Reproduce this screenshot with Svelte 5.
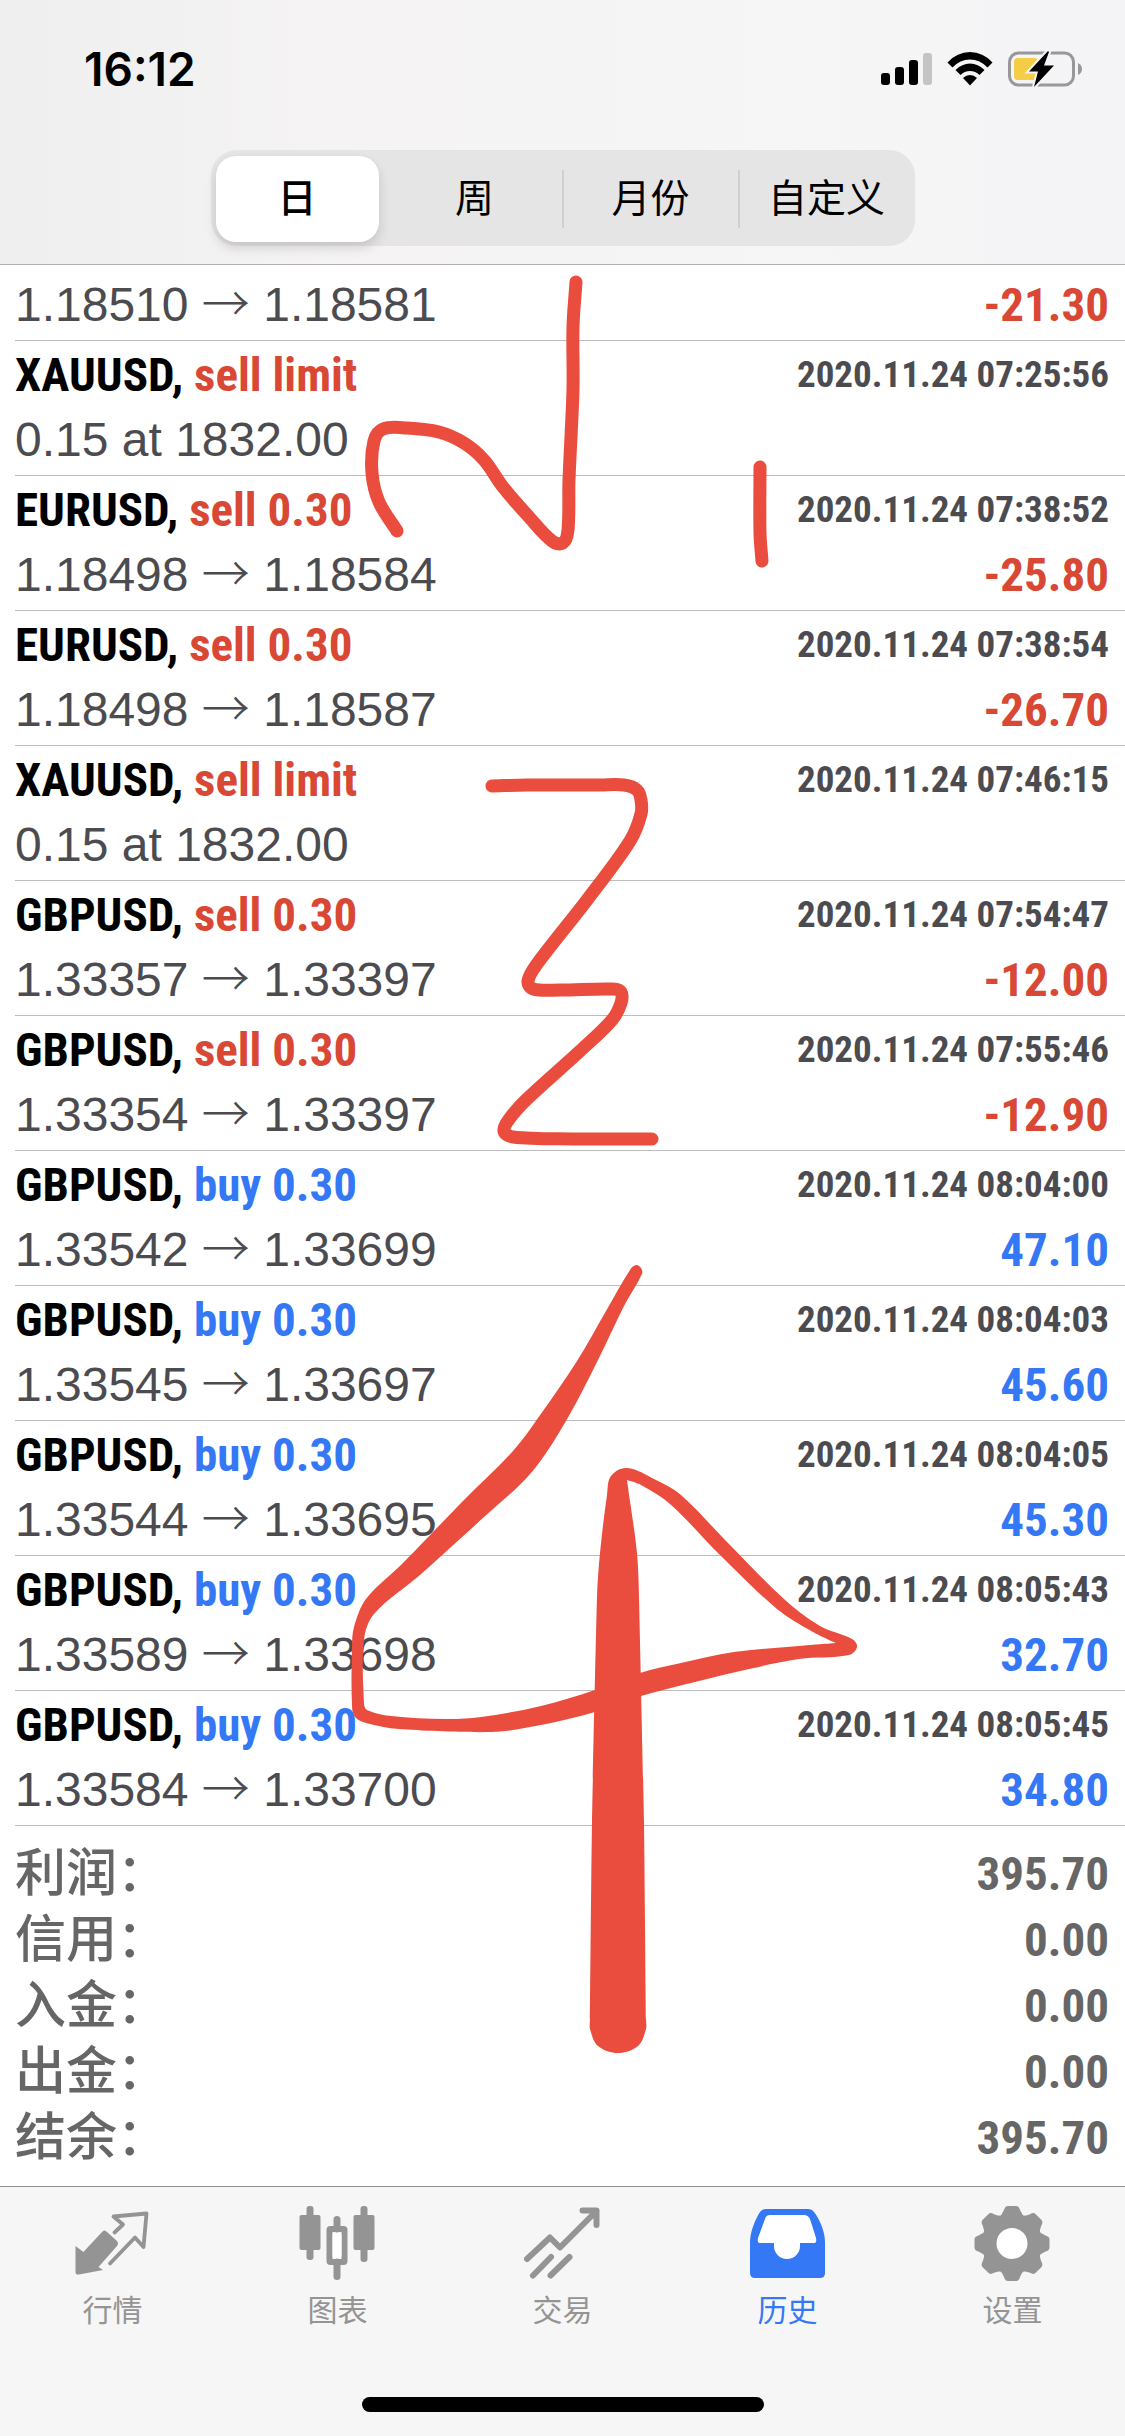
<script>
  const periods = ['日', '周', '月份', '自定义'];
  let period = $state('日');

  const deals = [
    { from: '1.18510', to: '1.18581', result: '-21.30' },
    { symbol: 'XAUUSD', side: 'sell', size: 'limit', time: '2020.11.24 07:25:56', note: '0.15 at 1832.00' },
    { symbol: 'EURUSD', side: 'sell', size: '0.30', time: '2020.11.24 07:38:52', from: '1.18498', to: '1.18584', result: '-25.80' },
    { symbol: 'EURUSD', side: 'sell', size: '0.30', time: '2020.11.24 07:38:54', from: '1.18498', to: '1.18587', result: '-26.70' },
    { symbol: 'XAUUSD', side: 'sell', size: 'limit', time: '2020.11.24 07:46:15', note: '0.15 at 1832.00' },
    { symbol: 'GBPUSD', side: 'sell', size: '0.30', time: '2020.11.24 07:54:47', from: '1.33357', to: '1.33397', result: '-12.00' },
    { symbol: 'GBPUSD', side: 'sell', size: '0.30', time: '2020.11.24 07:55:46', from: '1.33354', to: '1.33397', result: '-12.90' },
    { symbol: 'GBPUSD', side: 'buy', size: '0.30', time: '2020.11.24 08:04:00', from: '1.33542', to: '1.33699', result: '47.10' },
    { symbol: 'GBPUSD', side: 'buy', size: '0.30', time: '2020.11.24 08:04:03', from: '1.33545', to: '1.33697', result: '45.60' },
    { symbol: 'GBPUSD', side: 'buy', size: '0.30', time: '2020.11.24 08:04:05', from: '1.33544', to: '1.33695', result: '45.30' },
    { symbol: 'GBPUSD', side: 'buy', size: '0.30', time: '2020.11.24 08:05:43', from: '1.33589', to: '1.33698', result: '32.70' },
    { symbol: 'GBPUSD', side: 'buy', size: '0.30', time: '2020.11.24 08:05:45', from: '1.33584', to: '1.33700', result: '34.80' }
  ];

  const totals = [
    ['利润', '395.70'],
    ['信用', '0.00'],
    ['入金', '0.00'],
    ['出金', '0.00'],
    ['结余', '395.70']
  ];

  const tabs = [
    { id: 'quotes', label: '行情' },
    { id: 'charts', label: '图表' },
    { id: 'trade', label: '交易' },
    { id: 'history', label: '历史' },
    { id: 'settings', label: '设置' }
  ];
  let tab = $state('history');

  // Smooth curve through a list of pen points; sharp turns stay sharp
  function spline(pts, closed = false) {
    const n = pts.length;
    const at = (i) => (closed ? pts[(i + n) % n] : pts[Math.max(0, Math.min(n - 1, i))]);
    const unit = (a, b) => {
      const len = Math.hypot(b[0] - a[0], b[1] - a[1]) || 1;
      return [(b[0] - a[0]) / len, (b[1] - a[1]) / len];
    };
    const tangent = (i) => {
      const [u, v] = [unit(at(i - 1), at(i)), unit(at(i), at(i + 1))];
      return u[0] * v[0] + u[1] * v[1] < -0.1 ? [0, 0] : unit(at(i - 1), at(i + 1));
    };
    let d = `M${pts[0][0]} ${pts[0][1]}`;
    const last = closed ? n : n - 1;
    for (let i = 0; i < last; i++) {
      const [b, c, t, u] = [at(i), at(i + 1), tangent(i), tangent(i + 1)];
      const h = Math.min(24, Math.hypot(c[0] - b[0], c[1] - b[1]) / 3);
      d += `C${b[0] + t[0] * h} ${b[1] + t[1] * h} ${c[0] - u[0] * h} ${c[1] - u[1] * h} ${c[0]} ${c[1]}`;
    }
    return closed ? d + 'Z' : d;
  }

  const penStrokes = [
    [[397, 531], [379, 502], [372, 473], [374, 441], [383, 429], [407, 428], [439, 432], [464, 443], [484, 460], [503, 487], [529, 517], [552, 541], [563, 543], [568, 530], [569, 480], [573, 390], [573, 327], [576, 282]],
    [[760, 467], [760, 533], [762, 561]],
    [[492, 786], [527, 785], [600, 785], [624, 785], [637, 790], [641, 800], [641, 814], [630, 841], [587, 900], [537, 964], [528, 981], [533, 989], [560, 990], [613, 989], [621, 992], [621, 1003], [612, 1020], [580, 1051], [527, 1099], [510, 1118], [504, 1131], [513, 1137], [573, 1139], [625, 1139], [652, 1139]]
  ];

  const brush = [
    [636, 1265], [630, 1270], [606, 1311], [577, 1361], [538, 1418], [513, 1451], [463, 1501], [402, 1564], [366, 1599], [354, 1627], [352, 1646], [352, 1706], [355, 1717], [366, 1723], [399, 1729], [491, 1732], [541, 1725], [595, 1712], [641, 1696], [695, 1682], [749, 1669], [799, 1659], [849, 1655], [857, 1647], [852, 1639], [820, 1626], [784, 1599], [727, 1542], [681, 1495], [656, 1480], [627, 1468], [611, 1476], [607, 1495], [600, 1553], [597, 1597], [592, 1821], [590, 2020], [590, 2029], [598, 2046], [618, 2053], [638, 2046], [646, 2029], [646, 2020], [644, 1821], [639, 1597], [637, 1553], [630, 1501], [627, 1480], [641, 1485], [670, 1504], [720, 1555], [777, 1609], [813, 1632], [836, 1643], [799, 1646], [734, 1652], [681, 1663], [640, 1673], [595, 1690], [541, 1706], [481, 1717], [445, 1719], [391, 1716], [367, 1710], [364, 1703], [364, 1640], [374, 1614], [420, 1575], [484, 1517], [531, 1473], [566, 1421], [599, 1358], [624, 1306], [642, 1274], [641, 1268]
  ];
</script>

<div class="page">
  <header>
    <div class="status">
      <time>16:12</time>
      <div class="indicators">
        <svg width="51" height="36" viewBox="0 0 51 36" aria-hidden="true">
          <rect x="0" y="22" width="9" height="12" rx="3" />
          <rect x="14" y="16" width="9" height="18" rx="3" />
          <rect x="28" y="9" width="9" height="25" rx="3" />
          <rect x="42" y="2" width="9" height="32" rx="3" fill="#c4c4c6" />
        </svg>
        <svg width="46" height="36" viewBox="0 0 46 36" aria-hidden="true">
          <path d="M0.500 11.500Q10 1 23 1T45.500 11.500L40.500 16.500Q33 8.500 23 8.500T5.500 16.500Z" />
          <path d="M8.500 19Q15 12.500 23 12.500T37.500 19L32.500 24Q28.500 20 23 20T13.500 24Z" />
          <path d="M16 27Q19 24 23 24T30 27L23 34.500Z" />
        </svg>
        <svg width="75" height="36" viewBox="0 0 75 36" aria-hidden="true">
          <rect x="1.500" y="2" width="64" height="32" rx="9" fill="none" stroke="#98989b" stroke-width="3" />
          <path d="M70 12Q74 14 74 18T70 24Z" fill="#98989b" />
          <rect x="6" y="7" width="24" height="22" rx="4" fill="#f5cc45" />
          <path d="M40 0L21 20.500H30L26 36L46 14.500H36L41 1Z" stroke="#f5f5f6" stroke-width="4" paint-order="stroke" />
        </svg>
      </div>
    </div>
    <div class="segments">
      {#each periods as p}
        <button class:chosen={p === period} aria-pressed={p === period} onclick={() => (period = p)}>{p}</button>
      {/each}
    </div>
  </header>

  <main>
    <ul>
      {#each deals as deal}
        <li class={deal.side}>
          {#if deal.symbol}
            <div class="line">
              <strong>{deal.symbol}, <span class="order">{deal.side} {deal.size}</span></strong>
              <time>{deal.time}</time>
            </div>
          {/if}
          <div class="line">
            {#if deal.note}
              <span class="price">{deal.note}</span>
            {:else}
              <span class="price">{deal.from} <span class="arrow">→</span> {deal.to}</span>
              <b class:loss={deal.result.startsWith('-')}>{deal.result}</b>
            {/if}
          </div>
        </li>
      {/each}
    </ul>
    <dl>
      {#each totals as [name, value]}
        <div class="total">
          <dt>{name}：</dt>
          <dd>{value}</dd>
        </div>
      {/each}
    </dl>
  </main>

  <footer>
    <nav>
      {#each tabs as t}
        <button class:active={t.id === tab} onclick={() => (tab = t.id)}>
          <svg width="78" height="78" viewBox="0 0 78 78" aria-hidden="true">
            {#if t.id === 'quotes'}
              <path d="M1.500 42L9.400 48L28 28Q30.400 25 33 28L43 37Q45 39.300 43 42L24.500 63L29 66L5 70.500Q1.500 71 1.500 68Z" />
              <path d="M40.500 28.500L49 20.500L39.500 12.500L72.500 9.500L69.500 43L61 33.500L36 59.500" class="outline" stroke-width="3.800" />
            {:else if t.id === 'charts'}
              <rect x="0.500" y="11" width="21" height="35" rx="2" />
              <rect x="7.500" y="2" width="7" height="54" rx="3" />
              <rect x="30.500" y="25" width="15" height="33" rx="1" class="outline" stroke-width="6" />
              <rect x="33.500" y="28" width="9" height="27" rx="3" fill="#fff" />
              <path d="M38 15.500V25M38 58V72.500" class="outline" stroke-width="7" />
              <rect x="54.500" y="11" width="21" height="35" rx="2" />
              <rect x="61.500" y="2" width="7" height="56" rx="3" />
            {:else if t.id === 'trade'}
              <path d="M3 55L26 33.500L36 43.500L71 8.500M58.500 6.500H72.500V21" class="outline" stroke-width="6" />
              <path d="M9 71.500L27 53M26.500 71.500L45.500 53" class="outline" stroke-width="6" />
            {:else if t.id === 'history'}
              <path d="M1 38C1 27 7 14 11 8Q13 5 17 5H59Q63 5 65 8C70 14 76 27 76 38V69Q76 74 71 74H6Q1 74 1 69Z" />
              <path d="M21 11H55Q59 11 61 15L67 34Q68 39 65 39H51V42A13 13 0 0 1 25 42V39H11Q8 39 9 34L16 15Q17 11 21 11Z" fill="#fff" />
            {:else}
              {#each [0, 45, 90, 135, 180, 225, 270, 315] as angle}
                <path d="M24 14Q28 11 30 6Q31 2 34 2H42Q45 2 46 6Q48 11 52 14L38 34Z" transform={`rotate(${angle} 38 39.500)`} />
              {/each}
              <circle cx="38" cy="39.500" r="28" />
              <circle cx="38" cy="39.500" r="15.500" fill="#fff" />
            {/if}
          </svg>
          <span>{t.label}</span>
        </button>
      {/each}
    </nav>
    <div class="home"></div>
  </footer>

  <svg class="ink" viewBox="0 0 1125 2436" aria-hidden="true">
    {#each penStrokes as pts}
      <path d={spline(pts)} class="pen" />
    {/each}
    <path d={spline(brush, true)} class="brush" />
  </svg>
</div>

<style>
  :global(body) {
    margin: 0;
    background: #fff;
  }

  .page {
    position: relative;
    display: flex;
    flex-direction: column;
    min-height: 100vh;
    font-family: 'Liberation Sans', 'Noto Sans CJK SC', sans-serif;
    color: #000;
  }

  button {
    border: 0;
    padding: 0;
    background: none;
    font: inherit;
    color: inherit;
  }

  header {
    padding-bottom: 18px;
    border-bottom: 1px solid #b2b2b4;
    background: linear-gradient(90deg, #efefef, #f5f3f3 30%, #f6f6f6 70%, #f4f4f6);
  }

  .status {
    display: flex;
    justify-content: space-between;
    align-items: center;
    height: 138px;
    padding: 0 42px 0 84px;
    margin-bottom: 12px;
  }

  .status time {
    font: 600 46px/48px Inter, sans-serif;
  }

  .indicators {
    display: flex;
    gap: 15px;
  }

  .segments {
    display: grid;
    grid-template-columns: repeat(4, 1fr);
    box-sizing: border-box;
    width: 704px;
    max-width: 100%;
    height: 96px;
    margin: 0 auto;
    padding: 6px 0;
    border-radius: 26px;
    background: #e5e5e6;
  }

  .segments button {
    position: relative;
    margin: 0 6px;
    border-radius: 20px;
    font-size: 39px;
    line-height: 86px;
    white-space: nowrap;
  }

  .segments .chosen {
    margin: 0 8px 0 5px;
    background: #fff;
    font-weight: 500;
    box-shadow: 0 6px 12px rgba(0, 0, 0, 0.14);
  }

  .segments button:nth-child(n + 3)::before {
    content: '';
    position: absolute;
    left: -7px;
    top: 14px;
    bottom: 14px;
    width: 2px;
    background: #d0d0d2;
  }

  main {
    flex: 1;
  }

  ul {
    margin: 0;
    padding: 4px 0 0 15px;
    list-style: none;
  }

  li {
    padding: 4px 16px 4px 0;
    border-bottom: 1px solid #bcbcbf;
  }

  .line {
    display: flex;
    justify-content: space-between;
    height: 63px;
    line-height: 63px;
    white-space: nowrap;
  }

  strong,
  b,
  .line time,
  dd {
    font-family: 'Roboto Condensed', 'Liberation Sans', sans-serif;
    font-weight: 700;
  }

  strong {
    font-size: 47px;
    line-height: 60px;
  }

  .sell .order,
  .loss {
    color: #d84835;
  }

  .buy .order {
    color: #3478f6;
  }

  .line time {
    font-size: 37px;
    line-height: 60px;
    color: #4b4b50;
  }

  .price {
    font-size: 48px;
    color: #4b4b50;
  }

  .arrow {
    font-family: 'Noto Sans CJK SC', sans-serif;
    font-weight: 300;
    line-height: 48px;
  }

  b {
    font-size: 47px;
    color: #3478f6;
  }

  b.loss {
    color: #d84835;
  }

  dl {
    margin: 0;
    padding: 15px 16px 15px 15px;
    color: #666;
  }

  .total {
    display: flex;
    justify-content: space-between;
    height: 66px;
    line-height: 66px;
  }

  dt {
    font-size: 51px;
    font-weight: 500;
  }

  dd {
    margin: 0;
    font-size: 47px;
  }

  footer {
    border-top: 1px solid #8e8e90;
    background: #f6f6f6;
  }

  nav {
    display: grid;
    grid-template-columns: repeat(5, 1fr);
    padding-top: 17px;
  }

  nav button {
    display: flex;
    flex-direction: column;
    align-items: center;
    gap: 8px;
    color: #949494;
    fill: currentColor;
    font-size: 30px;
    line-height: 42px;
  }

  nav .active {
    color: #3478f6;
  }

  .outline {
    fill: none;
    stroke: currentColor;
    stroke-linecap: round;
    stroke-linejoin: round;
  }

  .home {
    width: 402px;
    height: 15px;
    margin: 65px auto 24px;
    border-radius: 8px;
    background: #000;
  }

  .ink {
    position: absolute;
    top: 0;
    left: 0;
    width: 100%;
    pointer-events: none;
  }

  .pen {
    fill: none;
    stroke: #ea4d3d;
    stroke-width: 13px;
    stroke-linecap: round;
    stroke-linejoin: round;
  }

  .brush {
    fill: #ea4d3d;
  }
</style>
